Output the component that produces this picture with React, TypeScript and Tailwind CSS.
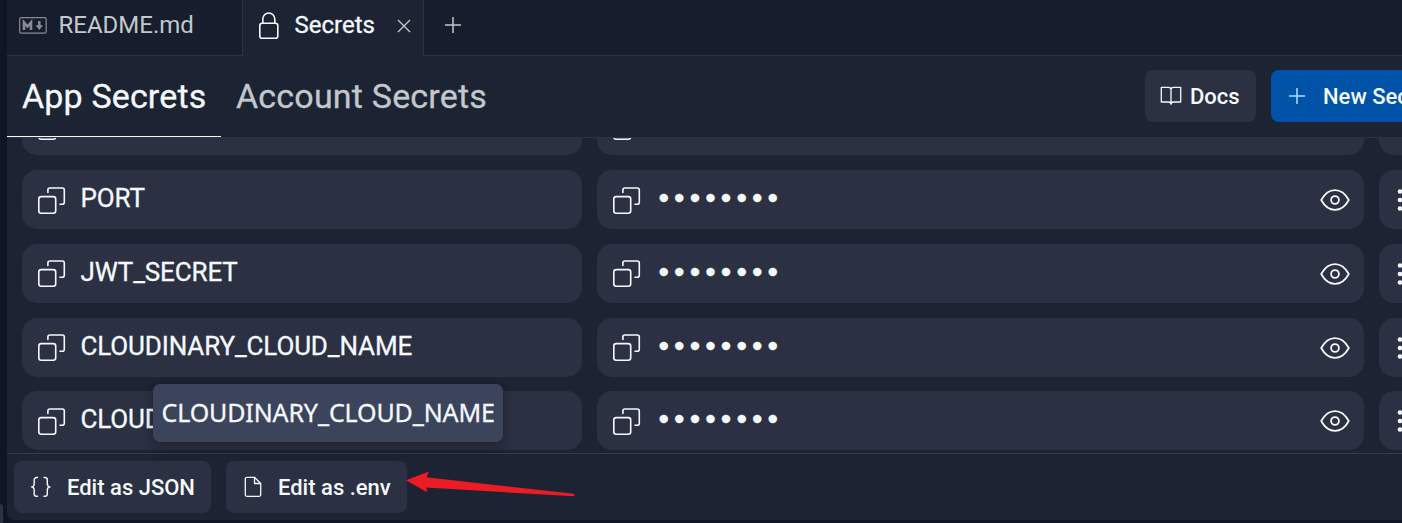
import type { ReactNode } from "react";

const CopyIcon = () => (
  <svg className="h-[30px] w-[30px] shrink-0" viewBox="0 0 30 30" fill="none" stroke="#f5f9fc" strokeWidth="1.6" strokeLinecap="round" strokeLinejoin="round">
    <rect x="1.8" y="11.6" width="16.900" height="16.600" rx="2.400" />
    <path d="M10.900 7.500V5a2 2 0 0 1 2-2H25.300a2 2 0 0 1 2 2V17.200a2 2 0 0 1-2 2H23" />
  </svg>
);

const EyeIcon = () => (
  <svg className="mt-[1px] h-[24px] w-[30px] shrink-0" viewBox="0 0 30 24" fill="none" stroke="#f5f9fc" strokeWidth="1.8" strokeLinejoin="round">
    <path d="M1.200 12C4.500 6 9.200 2.100 15 2.100S25.500 6 28.800 12C25.500 18 20.800 21.900 15 21.900S4.500 18 1.200 12Z" />
    <circle cx="15" cy="12" r="3.900" />
  </svg>
);

const PlusIcon = ({ color }: { color: string }) => (
  <svg className="h-[18px] w-[18px] shrink-0" viewBox="0 0 18 18" fill="none" stroke={color} strokeWidth="1.5">
    <path d="M1 9H17M9 1V17" />
  </svg>
);

const DotsIcon = () => (
  <svg className="mt-[1px] h-[24px] w-[6px] shrink-0" viewBox="0 0 6 24" fill="#f5f9fc">
    <circle cx="3" cy="3.500" r="2.300" />
    <circle cx="3" cy="12" r="2.300" />
    <circle cx="3" cy="20.500" r="2.300" />
  </svg>
);

const Cell = ({ className, children }: { className: string; children: ReactNode }) => (
  <div className={`flex h-[59px] shrink-0 items-center rounded-[15px] bg-[#2b3042] ${className}`}>{children}</div>
);

const SecretRow = ({ name }: { name?: string }) => (
  <div className="flex shrink-0 gap-[15px] pl-[15px]">
    <Cell className="w-[560px] pl-[15px]">
      <CopyIcon />
      <span className="-mt-[3px] ml-[13.500px] text-[26px] leading-[36px] tracking-[-0.130px] [-webkit-text-stroke:0.3px]">{name}</span>
    </Cell>
    <Cell className="w-[767px] pr-[14px] pl-[15px]">
      <CopyIcon />
      <span className="-mt-[3px] ml-[16.500px] grow font-['Liberation_Sans',sans-serif] text-[30px] leading-[36px] tracking-[5.080px] [-webkit-text-stroke:0.3px]">
        {name ? "••••••••" : ""}
      </span>
      <EyeIcon />
    </Cell>
    <Cell className="w-[60px] pl-[18px]">
      <DotsIcon />
    </Cell>
  </div>
);

const secrets = ["PORT", "JWT_SECRET", "CLOUDINARY_CLOUD_NAME", "CLOUDINARY_API_KEY"];

export default function App() {
  return (
    <div className="relative flex h-[523px] w-[1402px] overflow-hidden bg-[#0e1525] font-[Roboto,sans-serif] whitespace-nowrap text-[#f5f9fc]">
      <div className="flex w-[7px] shrink-0 items-end">
        <div className="h-[19px] w-[3px] rounded-tr-[3px] bg-[#2b3245]" />
      </div>
      <div className="flex h-[520px] w-[1395px] flex-col overflow-hidden rounded-bl-[8px] bg-[#1c2333]">
        <div className="flex h-[56px] shrink-0">
          <div className="flex w-[236px] shrink-0 items-center border-r border-b border-[#2b3245] bg-[#171d2d] pb-[6px] pl-[12px]">
            <svg className="mt-[1px] h-[17px] w-[28px]" viewBox="0 0 28 17" fill="none" stroke="#868b95">
              <rect x="0.700" y="0.700" width="26.500" height="15.500" rx="1.500" strokeWidth="1.200" />
              <path d="M5 13V5.500l3.500 4L12 5.500V13" strokeWidth="2.600" />
              <path d="M20.300 4v6" strokeWidth="2.500" />
              <path d="M16.500 8.300h7.600L20.300 13Z" fill="#868b95" stroke="none" />
            </svg>
            <span className="ml-[11.500px] text-[24px] leading-[32px] text-[#c2c8cc]">README.md</span>
          </div>
          <div className="flex w-[180px] shrink-0 items-center pb-[6px] pl-[15px]">
            <svg className="mt-[2px] h-[28px] w-[22px]" viewBox="0 0 22 28" fill="none" stroke="#f5f9fc" strokeWidth="1.600">
              <rect x="1.800" y="11.300" width="18" height="15" rx="2.300" />
              <path d="M4.800 11V7a6 6 0 0 1 12 0v4" />
            </svg>
            <span className="ml-[14.500px] text-[24px] leading-[32px] [-webkit-text-stroke:0.3px]">Secrets</span>
            <svg className="mt-[2px] ml-[22px] h-[14px] w-[14px]" viewBox="0 0 14 14" stroke="#c2c8cc" strokeWidth="1.400">
              <path d="M1 1L13 13M13 1L1 13" />
            </svg>
          </div>
          <div className="flex grow items-center border-b border-l border-[#2b3245] bg-[#171d2d] pb-[5px] pl-[20px]">
            <PlusIcon color="#c2c8cc" />
          </div>
        </div>

        <div className="flex h-[82px] shrink-0 border-b border-[#2b3245]">
          <div className="flex w-[214px] shrink-0 items-center border-b border-[#f5f9fc] pl-[15px] text-[34px] tracking-[0.150px] [-webkit-text-stroke:0.3px]">App Secrets</div>
          <div className="flex w-[924px] shrink-0 items-center pl-[15px] text-[34px] tracking-[0.190px] text-[#c2c8cc] [-webkit-text-stroke:0.3px]">Account Secrets</div>
          <div className="mt-[14px] flex h-[52px] w-[111px] shrink-0 items-center rounded-[8px] bg-[#2b3042] pl-[15px] text-[22px] font-medium">
            <svg className="h-[22px] w-[22px]" viewBox="0 0 22 22" fill="none" stroke="#f5f9fc" strokeWidth="1.300" strokeLinejoin="round">
              <path d="M11 4.500C11 3 10 2.300 8.500 2.300H1.300V17H8.500C10 17 11 17.800 11 19.300C11 17.800 12 17 13.500 17H20.700V2.300H13.500C12 2.300 11 3 11 4.500V19.300" />
            </svg>
            <span className="ml-[8px]">Docs</span>
          </div>
          <div className="mt-[14px] ml-[15px] flex h-[52px] w-[190px] shrink-0 items-center rounded-[8px] bg-[#0053a6] pl-[17px] text-[22px] font-medium">
            <PlusIcon color="#b8dcff" />
            <span className="ml-[17px]">New Secret</span>
          </div>
        </div>

        <div className="flex h-[315px] shrink-0 flex-col justify-start overflow-hidden">
          <div className="-mt-[41.800px] flex flex-col gap-[14.800px]">
            <SecretRow />
            {secrets.map((name) => (
              <SecretRow key={name} name={name} />
            ))}
          </div>
        </div>

        <div className="flex h-[67px] shrink-0 gap-[15px] border-t border-[#323b4f] pt-[7px] pl-[7px] text-[22px] font-medium">
          <div className="flex h-[52px] w-[197px] items-center rounded-[8px] bg-[#2b3042] pl-[16px]">
            <svg className="h-[22px] w-[22px]" viewBox="0 0 22 22" fill="none" stroke="#f5f9fc" strokeWidth="1.400" strokeLinecap="round" strokeLinejoin="round">
              <path d="M7.500 1.500H6.500A2.300 2.300 0 0 0 4.200 3.800V7.500C4.200 9.500 3 10.900 1.500 10.900C3 10.900 4.200 12.300 4.200 14.300V18A2.300 2.300 0 0 0 6.500 20.300H7.500M14 1.500H15A2.300 2.300 0 0 1 17.300 3.800V7.500C17.300 9.500 18.500 10.900 20 10.900C18.500 10.900 17.300 12.300 17.300 14.300V18A2.300 2.300 0 0 1 15 20.300H14" />
            </svg>
            <span className="ml-[15px]">Edit as JSON</span>
          </div>
          <div className="flex h-[52px] w-[181px] items-center rounded-[8px] bg-[#2b3042] pl-[18px]">
            <svg className="h-[22px] w-[18px]" viewBox="0 0 18 22" fill="none" stroke="#f5f9fc" strokeWidth="1.300" strokeLinejoin="round">
              <path d="M10.500 1.300H3A1.700 1.700 0 0 0 1.300 3V18.700A1.700 1.700 0 0 0 3 20.400H15A1.700 1.700 0 0 0 16.700 18.700V7.500ZM10.500 1.300V7.500H16.700" />
            </svg>
            <span className="ml-[16px]">Edit as .env</span>
          </div>
        </div>
      </div>

      <div className="absolute top-[384px] left-[153px] flex h-[58px] w-[350px] items-center rounded-[7px] bg-[#3c445c] pl-[8.500px] font-['Noto_Sans',sans-serif] text-[25px] tracking-[-0.120px] shadow-[0_4px_12px_rgba(2,2,3,0.32)] [-webkit-text-stroke:0.3px]">
        CLOUDINARY_CLOUD_NAME
      </div>
      <svg className="absolute top-[468px] left-[404px] h-[32px] w-[174px]" viewBox="0 0 174 32" fill="#ed1c24">
        <path d="M2 12.300L25 3.500L22.500 9.300L170 25.800Q171 27 170 28.300L22 19.500L23.500 24.500Z" />
      </svg>
    </div>
  );
}
